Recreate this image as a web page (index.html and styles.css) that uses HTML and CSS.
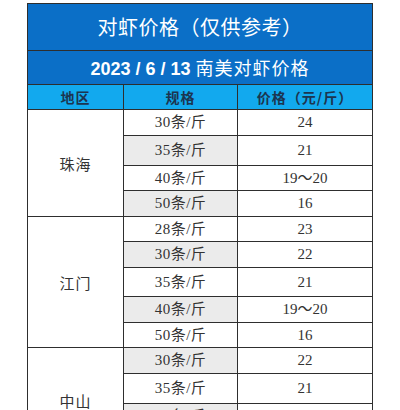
FILE: index.html
```html
<!DOCTYPE html>
<html lang="zh-CN">
<head>
<meta charset="utf-8">
<title>对虾价格</title>
<link rel="stylesheet" href="styles.css">
</head>
<body>
<div class="page">
<table class="price">
  <colgroup><col class="c1"><col class="c2"><col class="c3"></colgroup>
  <tr class="title"><td colspan="3">对虾价格（仅供参考）</td></tr>
  <tr class="sub"><td colspan="3"><b>2023 / 6 / 13</b> 南美对虾价格</td></tr>
  <tr class="head"><td>地区</td><td>规格</td><td>价格（元/斤）</td></tr>

  <tr class="h26"><td class="region" rowspan="4">珠海</td><td class="spec">30条/斤</td><td class="num">24</td></tr>
  <tr class="h30"><td class="spec gray">35条/斤</td><td class="num">21</td></tr>
  <tr class="h25"><td class="spec">40条/斤</td><td class="num">19～20</td></tr>
  <tr class="h26"><td class="spec gray">50条/斤</td><td class="num">16</td></tr>

  <tr class="h25"><td class="region" rowspan="5">江门</td><td class="spec">28条/斤</td><td class="num">23</td></tr>
  <tr class="h26"><td class="spec gray">30条/斤</td><td class="num">22</td></tr>
  <tr class="h29"><td class="spec">35条/斤</td><td class="num">21</td></tr>
  <tr class="h26"><td class="spec gray">40条/斤</td><td class="num">19～20</td></tr>
  <tr class="h25"><td class="spec">50条/斤</td><td class="num">16</td></tr>

  <tr class="h26"><td class="region" rowspan="4">中山</td><td class="spec gray">30条/斤</td><td class="num">22</td></tr>
  <tr class="h30"><td class="spec">35条/斤</td><td class="num">21</td></tr>
  <tr class="h25"><td class="spec gray">40条/斤</td><td class="num">19～20</td></tr>
  <tr class="h25"><td class="spec">50条/斤</td><td class="num">16</td></tr>
</table>
</div>
</body>
</html>
```

FILE: styles.css
```css
html, body {
  margin: 0;
  padding: 0;
  background: #ffffff;
}
.page {
  padding: 3px 0 0 27px;
}
.price {
  border-collapse: collapse;
  width: 345px;
  table-layout: fixed;
  font-family: "Liberation Serif", "Noto Sans CJK SC", serif;
  color: #333333;
}
.c1 { width: 96px; }
.c2 { width: 114px; }
.c3 { width: 135px; }
.price td {
  border: 1px solid #2e2e2e;
  padding: 0;
  text-align: center;
  vertical-align: middle;
  font-size: 15px;
  line-height: 1;
}
.title td {
  height: 46px;
  background: #0b6fc7;
  color: #ffffff;
  font-family: "Noto Sans CJK SC", sans-serif;
  font-size: 20px;
  letter-spacing: 0.5px;
}
.sub td {
  height: 33px;
  background: #0b6fc7;
  color: #ffffff;
  font-family: "Noto Sans CJK SC", sans-serif;
  font-size: 18px;
  letter-spacing: 1px;
}
.sub b {
  font-family: "Liberation Sans", sans-serif;
  font-weight: 700;
  letter-spacing: 0;
}
.head td {
  height: 24px;
  background: #12a9ee;
  color: #1c3550;
  font-family: "Noto Sans CJK SC", sans-serif;
  font-weight: 700;
  font-size: 14px;
  letter-spacing: 1px;
}
.region {
  font-family: "Noto Sans CJK SC", serif;
  font-size: 15px;
  letter-spacing: 1px;
  background: #ffffff;
}
.spec {
  background: #ffffff;
  letter-spacing: 0.5px;
}
.spec.gray {
  background: #ebebeb;
}
.num {
  background: #ffffff;
}
.h25 { height: 25px; }
.h26 { height: 26px; }
.h29 { height: 29px; }
.h30 { height: 30px; }
```
